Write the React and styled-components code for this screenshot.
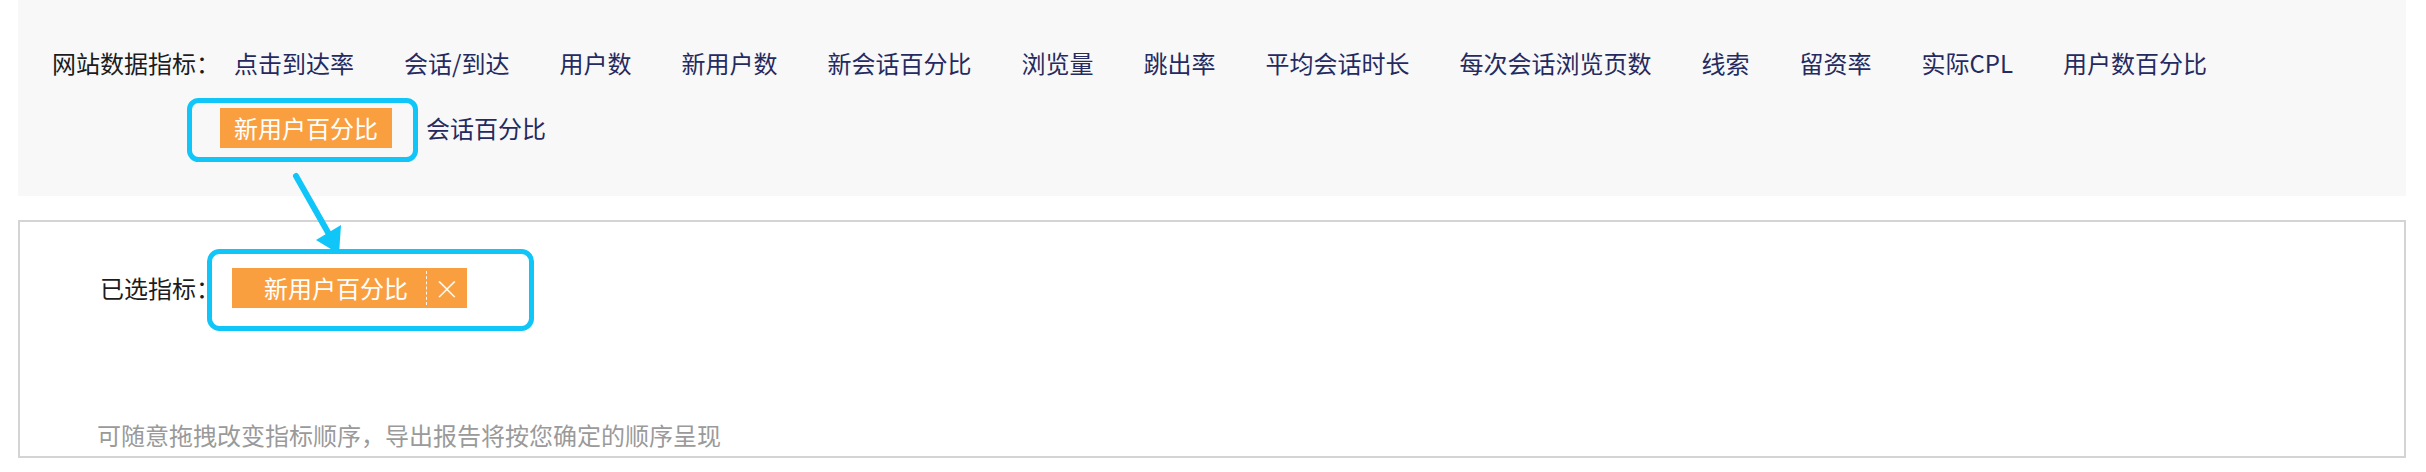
import React from "react";
import styled, { createGlobalStyle } from "styled-components";

const GlobalStyle = createGlobalStyle`
  body {
    margin: 0;
    background: #fff;
    font-family: "Noto Sans CJK SC", "Noto Sans", sans-serif;
  }
`;

export const Page = styled.div`
  position: relative;
  width: 2426px;
  height: 472px;
  box-sizing: border-box;
  padding: 0 20px 0 18px;
`;

export const MetricPanel = styled.div`
  display: flex;
  align-items: flex-start;
  height: 196px;
  box-sizing: border-box;
  padding: 43px 20px 0 34px;
  background: #f8f8f8;
`;

export const Label = styled.div`
  flex: 0 0 166px;
  height: 40px;
  line-height: 40px;
  font-size: 24px;
  color: #1c1c1c;
  white-space: nowrap;
`;

export const Options = styled.div`
  flex: 1;
  display: flex;
  flex-wrap: wrap;
  row-gap: 25px;
`;

export const Option = styled.span`
  height: 40px;
  line-height: 40px;
  padding: 0 14px;
  margin-right: ${(p) => (p.$active ? "20px" : "22px")};
  font-size: 24px;
  white-space: nowrap;
  color: ${(p) => (p.$active ? "#fff" : "#252a60")};
  background: ${(p) => (p.$active ? "#fa9f3f" : "transparent")};
`;

export const SelectedPanel = styled.div`
  display: flex;
  flex-direction: column;
  height: 238px;
  margin-top: 24px;
  box-sizing: border-box;
  border: 2px solid #d4d4d4;
  padding-top: 46px;
`;

export const SelectedRow = styled.div`
  display: flex;
  align-items: center;
  padding-left: 80px;
`;

export const SelectedLabel = styled(Label)`
  flex: 0 0 132px;
`;

export const Chip = styled.div`
  display: flex;
  height: 40px;
  background: #fa9f3f;
  color: #fff;
  font-size: 24px;
  line-height: 40px;
`;

export const ChipText = styled.span`
  padding: 0 18px 0 32px;
  white-space: nowrap;
`;

export const ChipClose = styled.span`
  width: 40px;
  margin: 3px 0;
  line-height: 34px;
  text-align: center;
  border-left: 1px dashed rgba(255, 255, 255, 0.9);
  font-size: 26px;
  font-weight: 300;
`;

export const Hint = styled.div`
  margin-top: auto;
  padding: 0 0 3px 77px;
  height: 36px;
  line-height: 36px;
  font-size: 24px;
  color: #9a9a9a;
`;

export const Overlay = styled.svg`
  position: absolute;
  top: 0;
  left: 0;
  pointer-events: none;
`;

const metrics = [
  "点击到达率",
  "会话/到达",
  "用户数",
  "新用户数",
  "新会话百分比",
  "浏览量",
  "跳出率",
  "平均会话时长",
  "每次会话浏览页数",
  "线索",
  "留资率",
  "实际CPL",
  "用户数百分比",
  "新用户百分比",
  "会话百分比",
];

const selected = ["新用户百分比"];

function Annotations() {
  const blue = "#10c5f8";
  return (
    <Overlay width="2426" height="472" viewBox="0 0 2426 472">
      <rect x="189.5" y="100.5" width="226" height="59" rx="9" fill="none" stroke={blue} strokeWidth="5" />
      <rect x="209.5" y="251.5" width="322" height="77" rx="10" fill="none" stroke={blue} strokeWidth="5" />
      <line x1="296" y1="176" x2="330" y2="236" stroke={blue} strokeWidth="6" strokeLinecap="round" />
      <polygon points="316,240 341,225 339,254" fill={blue} />
    </Overlay>
  );
}

export default function App() {
  return (
    <Page>
      <GlobalStyle />
      <MetricPanel>
        <Label>网站数据指标：</Label>
        <Options>
          {metrics.map((m) => (
            <Option key={m} $active={selected.includes(m)}>
              {m}
            </Option>
          ))}
        </Options>
      </MetricPanel>
      <SelectedPanel>
        <SelectedRow>
          <SelectedLabel>已选指标：</SelectedLabel>
          {selected.map((m) => (
            <Chip key={m}>
              <ChipText>{m}</ChipText>
              <ChipClose>×</ChipClose>
            </Chip>
          ))}
        </SelectedRow>
        <Hint>可随意拖拽改变指标顺序，导出报告将按您确定的顺序呈现</Hint>
      </SelectedPanel>
      <Annotations />
    </Page>
  );
}
